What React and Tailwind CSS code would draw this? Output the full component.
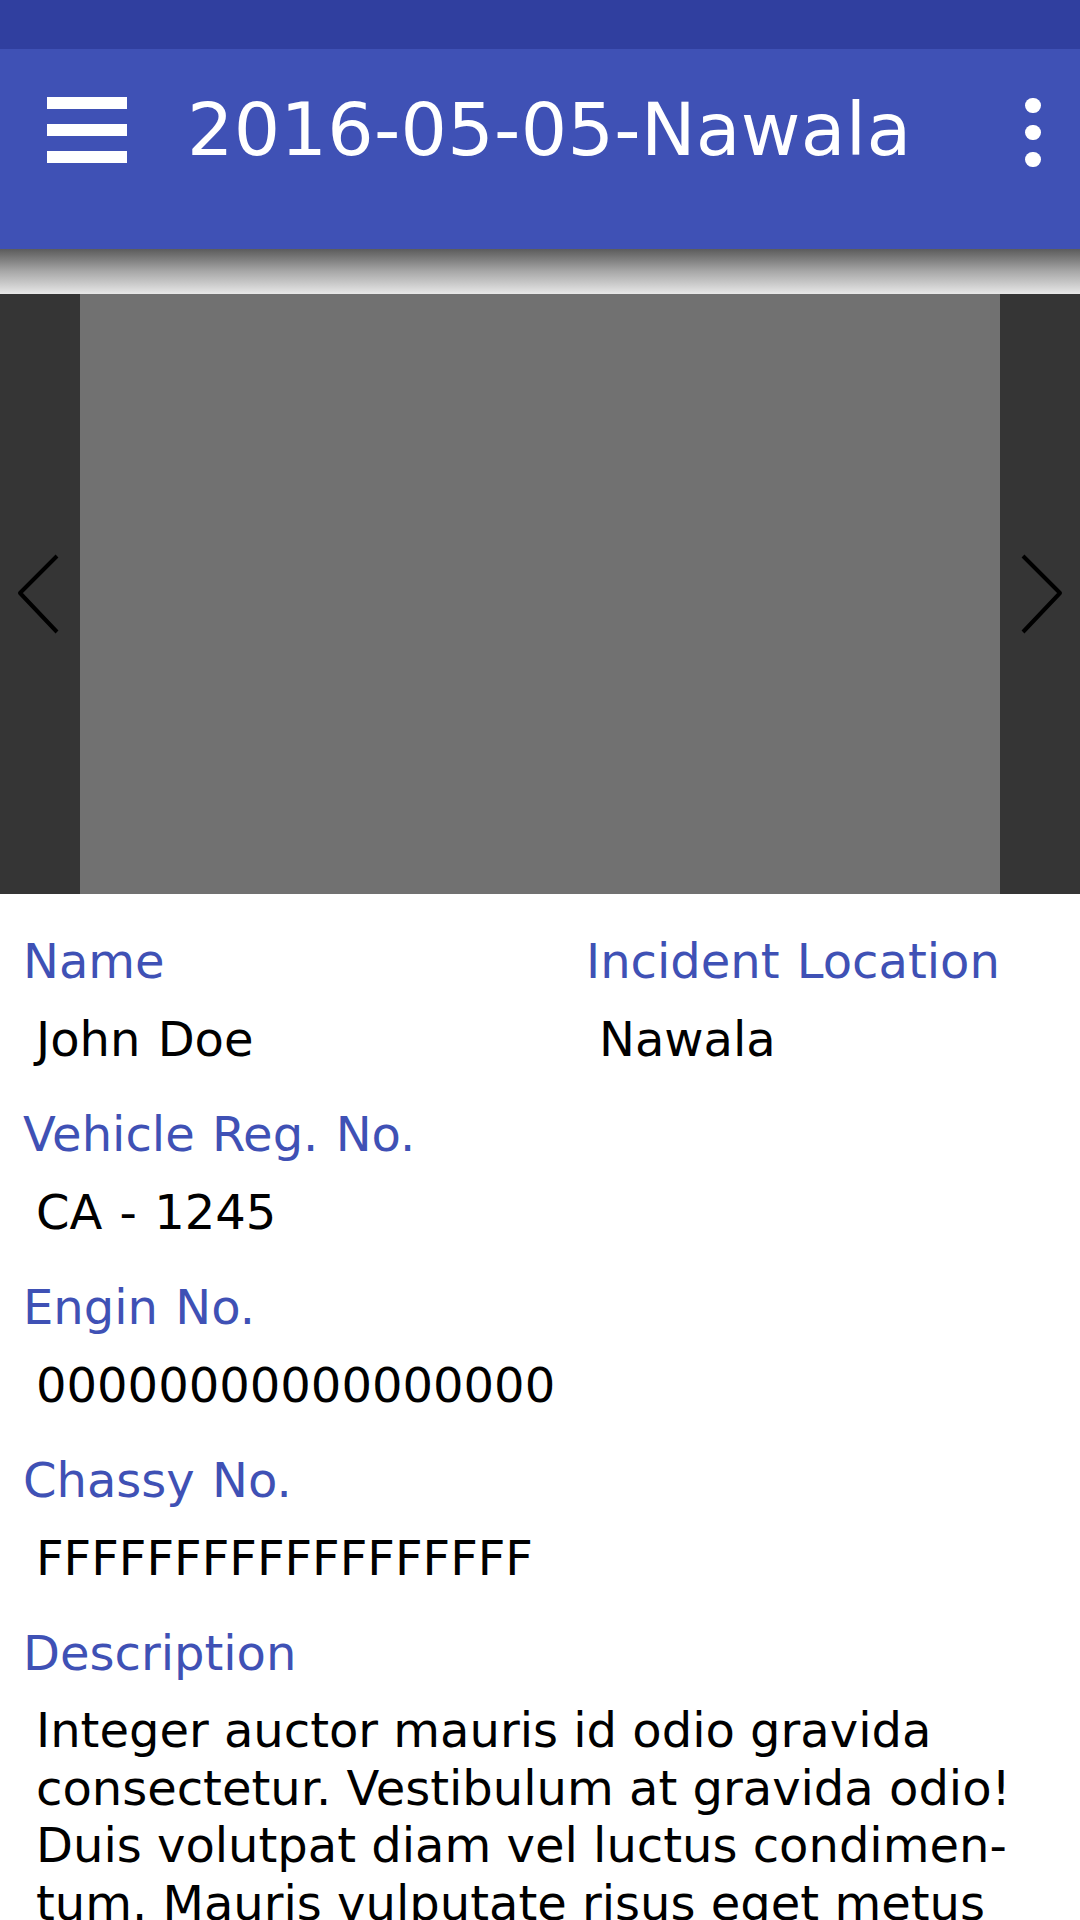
import React from "react";

const font = { fontFamily: '"DejaVu Sans", Verdana, sans-serif' };

function Field({ label, value }) {
  return (
    <div>
      <div className="text-[48px] leading-[58px] text-[#3F51B5] whitespace-nowrap [word-spacing:2px]">{label}</div>
      <div className="mt-[20px] pl-[13px] text-[48px] leading-[58px] text-black whitespace-nowrap [word-spacing:2px]">{value}</div>
    </div>
  );
}

export default function App() {
  return (
    <div className="w-[1080px] h-[1920px] overflow-hidden bg-white" style={font}>
      <div className="h-[49px] bg-[#303F9F]" />
      <div className="h-[200px] bg-[#3F51B5] flex items-start pt-[44px]">
        <div className="ml-[47px] mt-[4px] w-[80px] h-[66px] flex flex-col justify-between">
          <div className="h-[12px] bg-white" />
          <div className="h-[12px] bg-white" />
          <div className="h-[12px] bg-white" />
        </div>
        <div className="ml-[60px] text-[73px] leading-[73px] text-white whitespace-nowrap [letter-spacing:0.3px]">2016-05-05-Nawala</div>
        <div className="ml-auto mr-[39px] mt-[5px] w-[16px] flex flex-col gap-[12px]">
          <div className="w-[16px] h-[15px] rounded-full bg-white" />
          <div className="w-[16px] h-[15px] rounded-full bg-white" />
          <div className="w-[16px] h-[15px] rounded-full bg-white" />
        </div>
      </div>
      <div className="h-[45px] bg-gradient-to-b from-[#5c5c5c] via-[#a8a8a8] to-[#e8e8e8]" />
      <div className="h-[600px] flex">
        <div className="w-[80px] bg-[#353535] flex items-center">
          <svg width="80" height="82" viewBox="0 0 80 82">
            <polyline points="57,3 20,40 57,79" fill="none" stroke="#000" strokeWidth="4" strokeLinejoin="round" />
          </svg>
        </div>
        <div className="flex-1 bg-[#717171]" />
        <div className="w-[80px] bg-[#353535] flex items-center">
          <svg width="80" height="82" viewBox="0 0 80 82">
            <polyline points="23,3 60,40 23,79" fill="none" stroke="#000" strokeWidth="4" strokeLinejoin="round" />
          </svg>
        </div>
      </div>
      <div className="px-[23px] pt-[38px] flex flex-col gap-[37px]">
        <div className="grid grid-cols-[563px_1fr]">
          <Field label="Name" value="John Doe" />
          <Field label="Incident Location" value="Nawala" />
        </div>
        <Field label="Vehicle Reg. No." value="CA - 1245" />
        <Field label="Engin No." value="00000000000000000" />
        <Field label="Chassy No." value="FFFFFFFFFFFFFFFFFF" />
        <div>
          <div className="text-[48px] leading-[58px] text-[#3F51B5]">Description</div>
          <div className="mt-[20px] pl-[13px] text-[48px] leading-[57.5px] text-black whitespace-nowrap">
            Integer auctor mauris id odio gravida
            <br />
            consectetur. Vestibulum at gravida odio!
            <br />
            Duis volutpat diam vel luctus condimen-
            <br />
            tum. Mauris vulputate risus eget metus
          </div>
        </div>
      </div>
    </div>
  );
}
